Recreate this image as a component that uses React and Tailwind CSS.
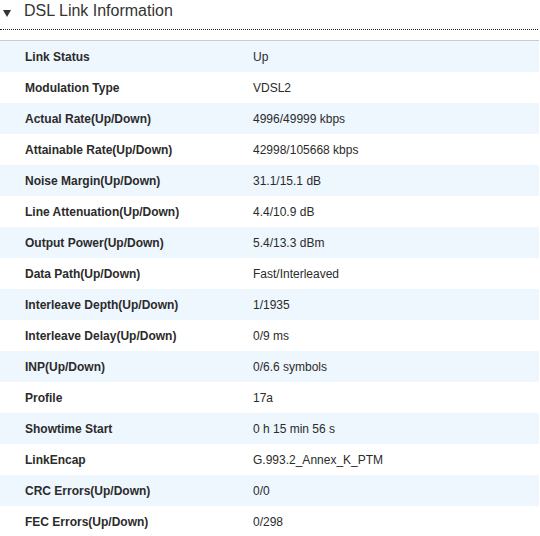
const FILAS = [
  ['Link Status', 'Up'],
  ['Modulation Type', 'VDSL2'],
  ['Actual Rate(Up/Down)', '4996/49999 kbps'],
  ['Attainable Rate(Up/Down)', '42998/105668 kbps'],
  ['Noise Margin(Up/Down)', '31.1/15.1 dB'],
  ['Line Attenuation(Up/Down)', '4.4/10.9 dB'],
  ['Output Power(Up/Down)', '5.4/13.3 dBm'],
  ['Data Path(Up/Down)', 'Fast/Interleaved'],
  ['Interleave Depth(Up/Down)', '1/1935'],
  ['Interleave Delay(Up/Down)', '0/9 ms'],
  ['INP(Up/Down)', '0/6.6 symbols'],
  ['Profile', '17a'],
  ['Showtime Start', '0 h 15 min 56 s'],
  ['LinkEncap', 'G.993.2_Annex_K_PTM'],
  ['CRC Errors(Up/Down)', '0/0'],
  ['FEC Errors(Up/Down)', '0/298'],
]

export default function App() {
  return (
    <div className="w-[540px] h-[536px] overflow-hidden bg-white text-[#2b2b2b] font-['Liberation_Sans',Arial,sans-serif]">
      <div className="w-[538px] h-[30px] pt-[2px] border-b border-dotted border-[#222] flex items-start">
        <svg width="24" height="18" viewBox="0 0 24 18" className="shrink-0">
          <polygon points="3,8 11,8 7,15" fill="#333" />
        </svg>
        <h2 className="text-[16px] leading-[18px] font-normal text-[#333]">DSL Link Information</h2>
      </div>
      <div className="mt-[10px] w-[539px] border-t border-[#cccccc]">
        {FILAS.map(([etiqueta, valor], i) => (
          <div
            key={etiqueta}
            className={`flex items-center h-[31px] text-[12px] ${i % 2 === 0 ? 'bg-[#eef6fe]' : 'bg-white'}`}
          >
            <div className="w-[253px] pl-[25px] font-bold">{etiqueta}</div>
            <div>{valor}</div>
          </div>
        ))}
      </div>
    </div>
  )
}
